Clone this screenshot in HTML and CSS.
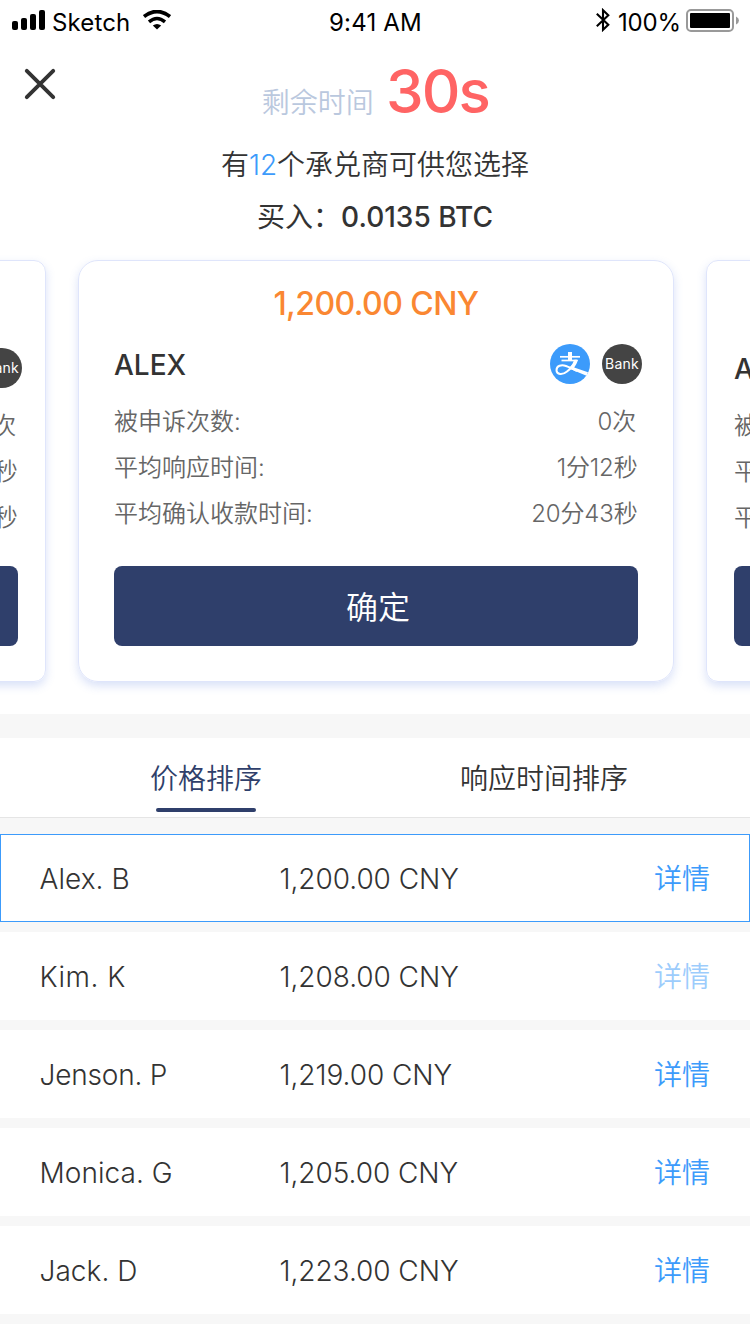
FILE: index.html
```html
<!DOCTYPE html>
<html lang="zh-CN">
<head>
<meta charset="utf-8">
<title>选择承兑商</title>
<link rel="stylesheet" href="styles.css">
</head>
<body>
<main class="screen">
  <div class="statusbar">
    <div class="status-left">
      <svg class="signal" width="34" height="20" viewBox="0 0 34 20"><rect x="0" y="11" width="6" height="9" rx="2"/><rect x="9" y="8" width="6" height="12" rx="2"/><rect x="18" y="4" width="6" height="16" rx="2"/><rect x="27" y="0" width="6" height="20" rx="2"/></svg>
      <span class="carrier">Sketch</span>
      <svg class="wifi" width="28" height="20" viewBox="0 0 28 20"><path d="M1 6.6Q14-3.6 27 6.6" fill="none" stroke="#000" stroke-width="3.7"/><path d="M6 11.9Q14 5.2 22 11.9" fill="none" stroke="#000" stroke-width="3.5"/><path d="M9.8 15.6Q14 12.2 18.2 15.6L14 19.6Z"/></svg>
    </div>
    <span class="clock">9:41 AM</span>
    <div class="status-right">
      <svg class="bluetooth" width="14" height="24" viewBox="0 0 14 24"><path d="M.8 5.8 12.3 16.7 7 21.8V2.2L12.3 7.3.8 18.2" fill="none" stroke="#000" stroke-width="2.1"/></svg>
      <span class="percent">100%</span>
      <svg class="battery" width="53" height="23" viewBox="0 0 53 23"><rect x="1" y="1" width="46" height="21" rx="4" fill="none" stroke="#999" stroke-width="2"/><rect x="4" y="4" width="40" height="15" rx="1"/><path d="M50 7.5Q53 9 53 11.5T50 15.5Z" fill="#999"/></svg>
    </div>
  </div>

  <header class="header">
    <button class="close" aria-label="关闭"><svg width="32" height="32" viewBox="0 0 32 32"><path d="M2.8 2.8 29.2 29.2M29.2 2.8 2.8 29.2" stroke="#333" stroke-width="3.9" stroke-linecap="round"/></svg></button>
    <div class="countdown"><span class="countdown-label">剩余时间</span><span class="countdown-value">30s</span></div>
  </header>
  <p class="available">有<span class="count">12</span>个承兑商可供您选择</p>
  <p class="buying"><span>买入：</span><span class="amount">0.0135 BTC</span></p>

  <section class="carousel">
    <article class="card side">
      <div class="price"></div>
      <div class="merchant"><span class="name"></span><span class="pay bank">Bank</span></div>
      <dl class="stats">
        <div class="stat"><dt></dt><dd class="times">0次</dd></div>
        <div class="stat"><dt></dt><dd>1分12秒</dd></div>
        <div class="stat"><dt></dt><dd>20分43秒</dd></div>
      </dl>
      <button class="confirm"></button>
    </article>
    <article class="card">
      <div class="price">1,200.00 CNY</div>
      <div class="merchant"><span class="name">ALEX</span>
        <svg class="pay" width="40" height="40" viewBox="0 0 40 40"><circle cx="20" cy="20" r="20" fill="#3c9bfb"/><g fill="none" stroke="#fff"><path d="M20 8V17" stroke-width="4"/><path d="M10 12.8H30" stroke-width="1.7"/><path d="M11.5 16.5H27" stroke-width="1.7"/><path d="M26.2 16.2Q23 23 17 27.5C12.5 31.2 6.5 30.6 6.5 26.2C6.5 21.6 11.5 20.3 16 22Q20 23.5 27 27" stroke-width="2"/></g><path d="M24.3 15.7H28.2Q26.6 20.2 24.2 23.5L38 28.2 36.5 31.7Q29.5 28.8 21 25.2L20 23Q23 19.8 24.3 15.7Z" fill="#fff"/></svg>
        <span class="pay bank">Bank</span></div>
      <dl class="stats">
        <div class="stat"><dt>被申诉次数:</dt><dd class="times">0次</dd></div>
        <div class="stat"><dt>平均响应时间:</dt><dd>1分12秒</dd></div>
        <div class="stat"><dt>平均确认收款时间:</dt><dd>20分43秒</dd></div>
      </dl>
      <button class="confirm">确定</button>
    </article>
    <article class="card side">
      <div class="price"></div>
      <div class="merchant"><span class="name">ALEX</span></div>
      <dl class="stats">
        <div class="stat"><dt>被申诉次数:</dt></div>
        <div class="stat"><dt>平均响应时间:</dt></div>
        <div class="stat"><dt>平均确认收款时间:</dt></div>
      </dl>
      <button class="confirm"></button>
    </article>
  </section>

  <nav class="tabs">
    <a class="tab active">价格排序</a>
    <a class="tab">响应时间排序</a>
  </nav>
  <ul class="offers">
    <li class="offer selected"><span class="seller">Alex. B</span><span class="quote">1,200.00 CNY</span><a class="detail">详情</a></li>
    <li class="offer"><span class="seller kim">Kim. K</span><span class="quote">1,208.00 CNY</span><a class="detail visited">详情</a></li>
    <li class="offer"><span class="seller jenson">Jenson. P</span><span class="quote">1,219.00 CNY</span><a class="detail">详情</a></li>
    <li class="offer"><span class="seller">Monica. G</span><span class="quote">1,205.00 CNY</span><a class="detail">详情</a></li>
    <li class="offer"><span class="seller">Jack. D</span><span class="quote">1,223.00 CNY</span><a class="detail">详情</a></li>
  </ul>
</main>
</body>
</html>
```

FILE: styles.css
```css
* { box-sizing: border-box; margin: 0; padding: 0; }
body { background: #fff; color: #333; font-family: Inter, "Noto Sans CJK SC DemiLight", "Noto Sans CJK SC", sans-serif; font-weight: 350; }
button { border: 0; background: none; font: inherit; }
.screen { width: 750px; height: 1334px; overflow: hidden; }

.statusbar { display: grid; grid-template-columns: 1fr auto 1fr; height: 40px; padding: 0 11px 0 12px; color: #000; font-size: 24px; line-height: 46px; font-weight: 400; }
.status-left, .status-right { display: flex; height: 40px; }
.status-right { justify-content: flex-end; }
.signal { margin-top: 10px; }
.carrier { margin-left: 6px; width: 78px; letter-spacing: .15px; }
.clock { letter-spacing: .2px; }
.wifi { margin: 10px 0 0 13px; }
.bluetooth { margin: 8px 8px 0 0; }
.percent { width: 62px; margin-right: 6px; letter-spacing: -.2px; }
.battery { margin-top: 9px; }

.header { display: grid; grid-template-columns: 64px 1fr 64px; height: 94px; }
.close { width: 32px; height: 32px; margin: 28px 0 0 24px; }
.countdown { display: flex; justify-content: center; align-items: baseline; height: 94px; line-height: 102px; padding-left: 1px; }
.countdown-label { font-size: 28px; color: #bac8de; margin-right: 12px; }
.countdown-value { font-size: 60px; font-weight: 500; letter-spacing: -1.8px; color: #ff6464; }
.available { height: 56px; line-height: 63px; text-align: center; font-size: 28px; }
.count { color: #3c9bfb; }
.buying { display: flex; justify-content: center; height: 52px; line-height: 54px; font-family: Inter, "Noto Sans CJK SC", sans-serif; font-size: 28px; font-weight: 400; }
.amount { font-weight: 500; }

.carousel { display: flex; justify-content: center; gap: 32px; height: 472px; padding: 18px 0 0 2px; overflow: hidden; }
.card { flex: none; width: 596px; height: 422px; padding: 0 35px; border: 1px solid #dfe5fb; border-radius: 20px; box-shadow: 0 4px 10px rgba(84, 119, 224, .22); }
.side { border-radius: 12px; padding: 0 27px; }
.price { height: 77px; line-height: 85px; text-align: center; font-size: 32px; font-weight: 500; letter-spacing: -.55px; color: #fa8732; }
.merchant { display: flex; align-items: center; gap: 12px; height: 52px; margin-right: -4px; }
.name { flex: 1; font-size: 28px; font-weight: 500; padding-top: 1px; }
.pay { flex: none; width: 40px; height: 40px; }
.bank { border-radius: 50%; background: #444; color: #fff; font-size: 14px; line-height: 40px; text-align: center; font-weight: 400; letter-spacing: .2px; }
.stats { height: 176px; padding-top: 9px; font-size: 24px; line-height: 46px; color: #666; }
.stat { display: flex; justify-content: space-between; height: 46px; }
.stat dd { letter-spacing: -.15px; padding-right: .5px; }
.stat .times { padding-right: 2px; }
.confirm { display: block; width: 100%; height: 80px; padding: 2px 0 0 4px; border-radius: 8px; background: #2f3f6b; color: #fff; font-size: 32px; line-height: 80px; }
.side .price { height: 81px; }
.side .stats { height: 172px; }

.tabs { display: grid; grid-template-columns: 412px 264px; height: 104px; border-top: 24px solid #f7f7f7; border-bottom: 1px solid #e5e5e5; font-size: 28px; line-height: 82px; text-align: center; }
.active { display: flex; flex-direction: column; align-items: center; color: #2f3f6b; }
.active::after { content: ""; width: 100px; height: 4px; margin-top: -12px; border-radius: 2px; background: #2f3f6b; }
.offers { display: flex; flex-direction: column; gap: 10px; list-style: none; padding: 16px 0 10px; background: #f7f7f7; }
.offer { display: grid; grid-template-columns: 240px 1fr auto; height: 88px; padding: 0 40px; background: #fff; font-size: 28px; line-height: 90px; }
.selected { border: 1px solid #3c9bfb; padding: 0 39px; line-height: 88px; }
.seller { margin-left: -.5px; letter-spacing: .05px; }
.kim { letter-spacing: .5px; }
.jenson { letter-spacing: -.2px; }
.quote { margin-left: -.5px; letter-spacing: -.05px; }
.detail { color: #3c9bfb; }
.visited { opacity: .5; }
```
